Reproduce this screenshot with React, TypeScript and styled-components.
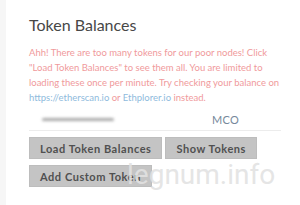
import React from 'react';
import styled, { createGlobalStyle } from 'styled-components';

const GlobalStyle = createGlobalStyle`
  html, body {
    margin: 0;
    padding: 0;
    background: #f6f6f6;
    overflow: hidden;
  }
`;

// Página
const Page = styled.div`
  position: relative;
  width: 300px;
  height: 205px;
  padding-left: 6px;
  box-sizing: border-box;
  font-family: Lato, 'Open Sans', sans-serif;
`;

// Cartão branco
const Card = styled.section`
  background: #ffffff;
  height: 100%;
  padding: 14px 19px 0 23px;
  box-sizing: border-box;
`;

const Title = styled.h3`
  margin: 0 0 9px 0;
  font-size: 16px;
  font-weight: 400;
  color: #474747;
  line-height: 22px;
`;

const Warning = styled.p`
  margin: 0;
  font-size: 9.5px;
  line-height: 15px;
  color: #f09a9c;
`;

const Line = styled.span`
  display: block;
  white-space: nowrap;
`;

const Link = styled.a`
  color: #8fbbdd;
  text-decoration: none;
`;

// Linha de token
const TokenRow = styled.div`
  display: grid;
  grid-template-columns: 1fr 1fr;
  align-items: center;
  height: 22px;
  margin-top: 3px;
  border-bottom: 1px solid #ececec;
`;

const Blurred = styled.div`
  width: 72px;
  height: 3px;
  margin-left: 13px;
  background: #a8a8a8;
  border-radius: 2px;
  filter: blur(1.5px);
`;

const Symbol = styled.span`
  font-size: 11px;
  color: #76889b;
  letter-spacing: 0.3px;
  padding-left: 57px;
`;

const Buttons = styled.div`
  display: flex;
  flex-wrap: wrap;
  gap: 6px 3px;
  margin-top: 6px;
  width: 240px;
`;

const Button = styled.button`
  height: 22px;
  padding: 0 10px;
  background: #c4c4c4;
  border: 1px solid #bdbdbd;
  border-radius: 0;
  font-family: Lato, 'Open Sans', sans-serif;
  font-weight: 700;
  font-size: 11px;
  letter-spacing: 0.55px;
  color: #505050;
`;

// Marca d'água sobreposta
const Watermark = styled.div`
  position: absolute;
  left: 127px;
  top: 158px;
  font-family: Roboto, 'Open Sans', sans-serif;
  font-size: 28px;
  line-height: 34px;
  color: rgba(226, 226, 226, 0.9);
  pointer-events: none;
`;

const App: React.FC = (): JSX.Element => {
  return (
    <Page>
      <GlobalStyle />
      <Card>
        <Title>Token Balances</Title>
        <Warning>
          <Line>Ahh! There are too many tokens for our poor nodes! Click</Line>
          <Line>"Load Token Balances" to see them all. You are limited to</Line>
          <Line>loading these once per minute. Try checking your balance on</Line>
          <Line>
            <Link href="#">https://etherscan.io</Link> or <Link href="#">Ethplorer.io</Link> instead.
          </Line>
        </Warning>
        <TokenRow>
          <Blurred />
          <Symbol>MCO</Symbol>
        </TokenRow>
        <Buttons>
          <Button>Load Token Balances</Button>
          <Button>Show Tokens</Button>
          <Button>Add Custom Token</Button>
        </Buttons>
      </Card>
      <Watermark>legnum.info</Watermark>
    </Page>
  );
};

export default App;
